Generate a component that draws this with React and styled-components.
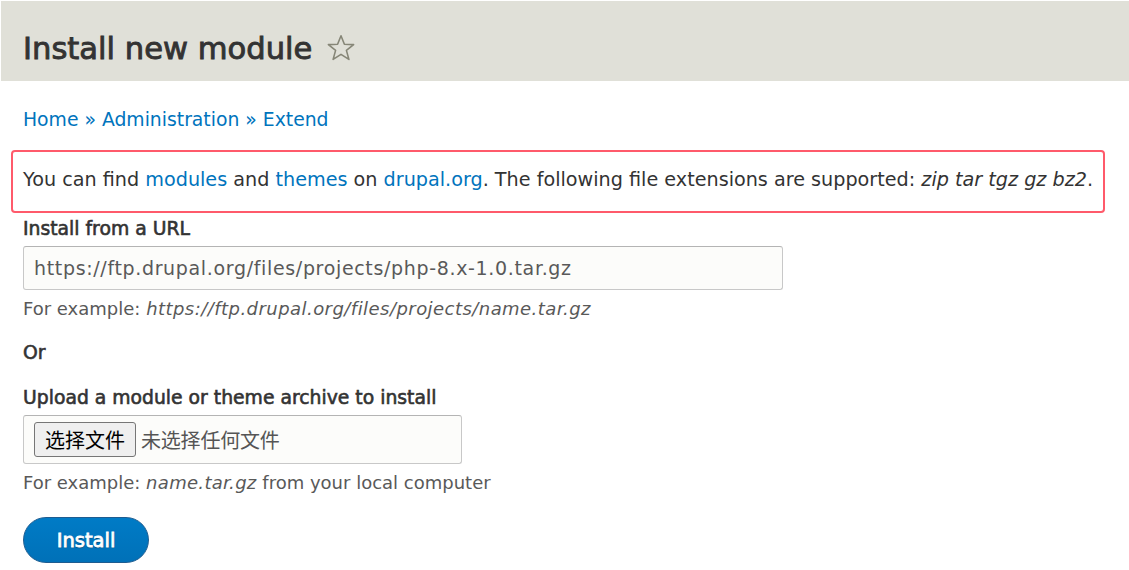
import React from "react";
import styled, { createGlobalStyle } from "styled-components";

const Global = createGlobalStyle`
  html, body { margin: 0; padding: 0; background: #fff; }
  body {
    font-family: "DejaVu Sans", "Noto Sans CJK SC", sans-serif;
    color: #333;
  }
`;

const Page = styled.div`
  width: 1129px;
  height: 570px;
  overflow: hidden;
  display: flex;
  flex-direction: column;
`;

const Header = styled.header`
  background: #e0e0d8;
  height: 80px;
  margin: 1px 0 0 1px;
  display: flex;
  align-items: center;
  padding: 0 22px;
  gap: 14px;
`;

const Title = styled.h1`
  margin: 0;
  font-size: 30.6px;
  font-weight: 400;
  -webkit-text-stroke: 0.9px #333;
  color: #333;
  padding-top: 16px;
  line-height: 38px;
`;

const StarIcon = styled.svg`
  margin-top: 14px;
  flex: none;
`;

const Star = () => (
  <StarIcon width="30" height="28" viewBox="0 0 30 28">
    <path
      d="M15 1.8 L18.4 10.2 L27.6 10.6 L20.4 16.4 L22.9 25.4 L15 20.3 L7.1 25.4 L9.6 16.4 L2.4 10.6 L11.6 10.2 Z"
      fill="none"
      stroke="#868677"
      strokeWidth="1.6"
      strokeLinejoin="round"
    />
  </StarIcon>
);

const Content = styled.main`
  padding: 0 23px;
  font-size: 19px;
  display: flex;
  flex-direction: column;
`;

const Breadcrumb = styled.nav`
  margin-top: 27px;
  line-height: 24px;
  color: #0074bd;
  font-size: 18.8px;
`;

const Link = styled.a`
  color: #0074bd;
  text-decoration: none;
`;

const Highlight = styled.div`
  margin: 18px 1px 0 -12px;
  border: 2px solid #ff5a6b;
  border-radius: 4px;
  padding: 0 0 4px 10px;
  height: 55px;
  display: flex;
  align-items: center;
  font-size: 19.2px;
  white-space: nowrap;
`;

const Label = styled.div`
  font-weight: 400;
  -webkit-text-stroke: 0.6px #333;
  font-size: 18.8px;
  line-height: 24px;
  margin-top: ${(p) => p.$top}px;
`;

const TextInput = styled.div`
  margin-top: 5px;
  width: ${(p) => p.$w}px;
  height: ${(p) => p.$h}px;
  box-sizing: border-box;
  border: 1px solid #c8c8c8;
  border-top-color: #b4b4b4;
  border-radius: 3px;
  background: #fcfcfa;
  display: flex;
  align-items: center;
  padding: 0 ${(p) => p.$pad}px;
  font-size: 19px;
  letter-spacing: 0.66px;
  color: #595959;
  gap: 5px;
  white-space: nowrap;
`;

const FileButton = styled.span`
  font-family: "Noto Sans CJK SC", sans-serif;
  font-size: 20px;
  letter-spacing: 0;
  color: #000;
  background: #efefef;
  border: 1px solid #767676;
  border-radius: 3px;
  height: 35px;
  padding: 0 10px;
  display: flex;
  align-items: center;
  box-sizing: border-box;
`;

const FileText = styled.span`
  font-family: "Noto Sans CJK SC", sans-serif;
  font-size: 20px;
  letter-spacing: -0.2px;
  color: #555;
`;

const Description = styled.div`
  margin-top: 7px;
  font-size: 18px;
  line-height: 24px;
  color: #595959;
  white-space: nowrap;
`;

const Example = styled.em`
  letter-spacing: ${(p) => p.$ls || 0}px;
`;

const Button = styled.button`
  margin-top: 22px;
  width: 126px;
  height: 46px;
  border: 1px solid #1e5c90;
  border-radius: 23px;
  background: linear-gradient(#007bc6, #0071b8);
  color: #fff;
  font-family: "DejaVu Sans", sans-serif;
  font-weight: 400;
  -webkit-text-stroke: 0.8px #fff;
  font-size: 19.5px;
  text-shadow: 0 1px 1px rgba(0, 0, 0, 0.5);
  cursor: pointer;
  padding: 0;
`;

export default function App() {
  return (
    <Page>
      <Global />
      <Header>
        <Title>Install new module</Title>
        <Star />
      </Header>
      <Content>
        <Breadcrumb>
          <Link href="#">Home</Link> » <Link href="#">Administration</Link> »{" "}
          <Link href="#">Extend</Link>
        </Breadcrumb>
        <Highlight>
          <span>
            You can find <Link href="#">modules</Link> and{" "}
            <Link href="#">themes</Link> on <Link href="#">drupal.org</Link>.
            The following file extensions are supported:{" "}
            <em>zip tar tgz gz bz2</em>.
          </span>
        </Highlight>
        <Label $top={4}>Install from a URL</Label>
        <TextInput $w={760} $h={44} $pad={10}>
          https://ftp.drupal.org/files/projects/php-8.x-1.0.tar.gz
        </TextInput>
        <Description>
          For example:{" "}
          <Example $ls={0.45}>https://ftp.drupal.org/files/projects/name.tar.gz</Example>
        </Description>
        <Label $top={20}>Or</Label>
        <Label $top={21}>Upload a module or theme archive to install</Label>
        <TextInput $w={439} $h={49} $pad={10}>
          <FileButton>选择文件</FileButton>
          <FileText>未选择任何文件</FileText>
        </TextInput>
        <Description>
          For example: <Example $ls={0.3}>name.tar.gz</Example> from your local computer
        </Description>
        <Button>Install</Button>
      </Content>
    </Page>
  );
}
